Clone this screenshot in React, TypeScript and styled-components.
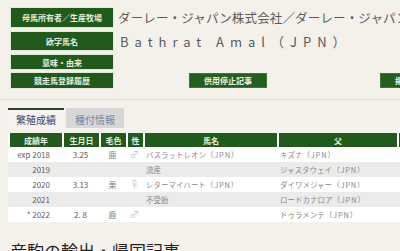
import React from 'react';
import styled, { createGlobalStyle } from 'styled-components';

const Global = createGlobalStyle`
  html, body { margin: 0; padding: 0; background: #f4f1eb; overflow: hidden; }
  body { font-family: "Noto Sans CJK JP", "Noto Sans", sans-serif; width: 400px; height: 251px; }
`;

const Page = styled.div`
  width: 620px;
  padding-top: 7px;
`;

const InfoRow = styled.div<{ $h: number; $gap: number }>`
  display: flex;
  align-items: center;
  height: ${(p) => p.$h}px;
  margin-top: ${(p) => p.$gap}px;
  margin-left: 10px;
  gap: 4px;
`;

const Label = styled.div`
  flex: 0 0 104px;
  height: 100%;
  box-sizing: border-box;
  background: #215b1c;
  border: 1px solid #e2e8dc;
  color: #e6ecdf;
  font-size: 8px;
  font-weight: 700;
  display: flex;
  align-items: center;
  justify-content: center;
  white-space: nowrap;
`;

const Value = styled.div<{ $wide?: boolean }>`
  color: #5a5a5a;
  font-size: ${(p) => (p.$wide ? 13 : 12.5)}px;
  letter-spacing: ${(p) => (p.$wide ? 6 : 0.15)}px;
  white-space: nowrap;
  padding-left: ${(p) => (p.$wide ? 2 : 0)}px;
`;

const ButtonBar = styled.div`
  display: flex;
  align-items: center;
  gap: 113px;
  padding-left: 71px;
  height: 100%;
`;

const GreenButton = styled.div`
  width: 78px;
  height: 15px;
  background: #236020;
  border: 1px solid #3a7a32;
  box-sizing: border-box;
  color: #eef2ea;
  font-size: 8px;
  font-weight: 700;
  display: flex;
  align-items: center;
  justify-content: center;
  white-space: nowrap;
  overflow: hidden;
`;

const Divider = styled.div`
  height: 1px;
  background: #dedbd5;
  margin-top: 10px;
`;

const TabBar = styled.div`
  display: flex;
  margin: 8px 0 0 8px;
  gap: 2px;
`;

const Tab = styled.div<{ $active?: boolean }>`
  width: ${(p) => (p.$active ? 56 : 58)}px;
  height: 20px;
  box-sizing: border-box;
  border-top: 2px solid ${(p) => (p.$active ? '#2f3d30' : '#d7d7d7')};
  background: ${(p) => (p.$active ? '#f6f4f0' : '#d7d7d7')};
  color: ${(p) => (p.$active ? '#34456a' : '#7584a6')};
  font-size: 10px;
  display: flex;
  align-items: center;
  justify-content: center;
`;

const cols = '54px 37px 27px 17px 134px 120px 130px';

const Table = styled.div`
  margin: 5px 0 0 8px;
`;

const HeadRow = styled.div`
  display: grid;
  grid-template-columns: ${cols};
  height: 14px;
  background: #fff;
`;

const HeadCell = styled.div`
  border-left: 2px solid #fff;
  background: #215b1c;
  color: #e6ecdf;
  font-size: 8px;
  font-weight: 700;
  display: flex;
  align-items: center;
  justify-content: center;
`;

const BodyRow = styled.div<{ $alt?: boolean }>`
  display: grid;
  grid-template-columns: ${cols};
  height: 15px;
  background: ${(p) => (p.$alt ? '#ebebea' : '#ffffff')};
`;

const Cell = styled.div<{ $align?: 'left' | 'center' | 'right'; $tone?: 'dark' | 'mid' | 'light'; $size?: number }>`
  display: flex;
  align-items: center;
  justify-content: ${(p) => (p.$align === 'left' ? 'flex-start' : p.$align === 'right' ? 'flex-end' : 'center')};
  padding: ${(p) => (p.$align === 'right' ? '0 12px 0 0' : p.$align === 'left' ? '0 0 0 3px' : '0')};
  font-size: ${(p) => p.$size ?? 8}px;
  color: ${(p) => (p.$tone === 'dark' ? '#606060' : p.$tone === 'light' ? '#c4c4c4' : '#8a8a8a')};
  white-space: nowrap;
  overflow: hidden;
`;

const Jpn = styled.span`
  letter-spacing: 0.8px;
`;

const Heading = styled.h2`
  margin: 16px 0 0 10px;
  font-size: 17px;
  font-weight: 400;
  color: #222;
  white-space: nowrap;
`;

type Row = { year: string; date: string; color: string; sex: string; name: string; nameJpn?: boolean; sire: string };

const rows: Row[] = [
  { year: 'exp 2018', date: '3.25', color: '鹿', sex: '♂', name: 'バスラットレオン', nameJpn: true, sire: 'キズナ' },
  { year: '2019', date: '', color: '', sex: '', name: '流産', sire: 'ジャスタウェイ' },
  { year: '2020', date: '3.13', color: '栗', sex: '♀', name: 'レターマイハート', nameJpn: true, sire: 'ダイワメジャー' },
  { year: '2021', date: '', color: '', sex: '', name: '不受胎', sire: 'ロードカナロア' },
  { year: '* 2022', date: '2. 8', color: '鹿', sex: '♂', name: '', sire: 'ドゥラメンテ' },
];

export default function App() {
  return (
    <>
      <Global />
      <Page>
        <InfoRow $h={21} $gap={0}>
          <Label>母馬所有者／生産牧場</Label>
          <Value>ダーレー・ジャパン株式会社／ダーレー・ジャパン株式会社</Value>
        </InfoRow>
        <InfoRow $h={20} $gap={3}>
          <Label>欧字馬名</Label>
          <Value $wide>Bathrat Amal（JPN）</Value>
        </InfoRow>
        <InfoRow $h={16} $gap={3}>
          <Label>意味・由来</Label>
        </InfoRow>
        <InfoRow $h={17} $gap={2}>
          <Label>競走馬登録履歴</Label>
          <ButtonBar>
            <GreenButton>供用停止記事</GreenButton>
            <GreenButton>掲載記事一覧</GreenButton>
          </ButtonBar>
        </InfoRow>
        <Divider />
        <TabBar>
          <Tab $active>繁殖成績</Tab>
          <Tab>種付情報</Tab>
        </TabBar>
        <Table>
          <HeadRow>
            <HeadCell>成績年</HeadCell>
            <HeadCell>生月日</HeadCell>
            <HeadCell>毛色</HeadCell>
            <HeadCell>性</HeadCell>
            <HeadCell>馬名</HeadCell>
            <HeadCell>父</HeadCell>
            <HeadCell>母の父</HeadCell>
          </HeadRow>
          {rows.map((r, i) => (
            <BodyRow key={r.year} $alt={i % 2 === 1}>
              <Cell $align="right" $tone="dark" $size={8}>{r.year}</Cell>
              <Cell $tone="dark" $size={8}>{r.date}</Cell>
              <Cell $size={8}>{r.color}</Cell>
              <Cell $tone="light" $size={9}>{r.sex}</Cell>
              <Cell $align="left" $size={7.5}>
                {r.name}
                {r.nameJpn && <Jpn>（JPN）</Jpn>}
              </Cell>
              <Cell $align="left" $size={7.5}>
                {r.sire}
                <Jpn>（JPN）</Jpn>
              </Cell>
              <Cell />
            </BodyRow>
          ))}
        </Table>
        <Heading>産駒の輸出・帰国記事</Heading>
      </Page>
    </>
  );
}
